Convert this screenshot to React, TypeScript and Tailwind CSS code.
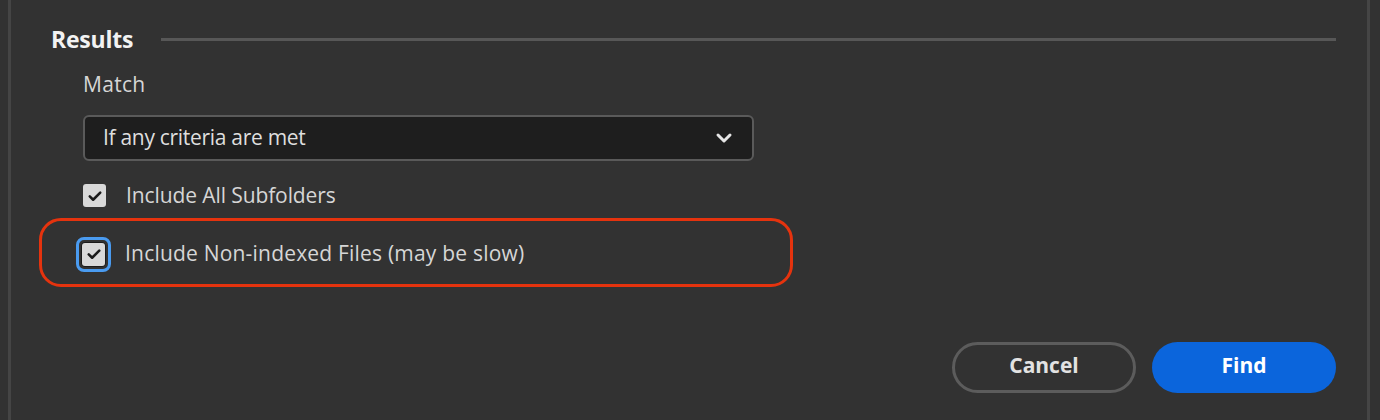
import { ChevronDown } from 'lucide-react'

const font = { fontFamily: '"Open Sans", Lato, sans-serif' }

function Check({ focused }: { focused?: boolean }) {
  const box = (
    <span className="flex h-[23px] w-[23px] items-center justify-center rounded-[3px] bg-[#d9d9d9]">
      <svg viewBox="0 0 24 24" className="h-[18px] w-[18px]" fill="none" stroke="#1b1b1b" strokeWidth="3.4" strokeLinecap="round" strokeLinejoin="round">
        <path d="M5 12.5l4.5 4.5L19 7.5" />
      </svg>
    </span>
  )
  if (!focused) return box
  return (
    <span className="flex items-center justify-center rounded-[8px] border-[3px] border-[#4a9bf0] p-[2px]">
      <span className="rounded-[4px] border border-[#1b1b1b]">{box}</span>
    </span>
  )
}

export default function App() {
  return (
    <div className="h-[420px] w-[1380px] overflow-hidden bg-[#323232] pl-[8px]" style={font}>
      <div className="flex h-full w-[1362px] flex-col border-x-[3px] border-[#454545] pt-[24px] pr-[31px]">
        {/* Section header */}
        <div className="flex items-center gap-[28px] pl-[40px]">
          <span className="text-[23px] font-bold leading-[30px] tracking-[-0.2px] text-[#f2f2f2]">Results</span>
          <div className="h-[3px] flex-1 bg-[#575757]" />
        </div>

        <div className="flex flex-col pl-[72px]">
          <span className="mt-[16px] text-[21px] leading-[28px] tracking-[0.3px] text-[#d6d6d6]">Match</span>

          <div className="mt-[17px] flex h-[46px] w-[671px] items-center justify-between rounded-[6px] border-2 border-[#5a5a5a] bg-[#1e1e1e] pl-[18px] pr-[16px]">
            <span className="text-[21px] tracking-[-0.3px] text-[#dedede]">If any criteria are met</span>
            <ChevronDown className="h-[24px] w-[24px] text-[#e6e6e6]" strokeWidth={3} />
          </div>

          <div className="mt-[19px] flex items-center gap-[20px]">
            <Check />
            <span className="text-[21px] tracking-[-0.1px] text-[#d6d6d6]">Include All Subfolders</span>
          </div>

          <div className="relative mt-[25px] flex items-center gap-[14px]">
            {/* highlight annotation */}
            <div className="absolute left-[-44px] top-[-19px] h-[69px] w-[754px] rounded-[22px] border-[3px] border-[#e5330e]" />
            <span className="ml-[-7px]">
              <Check focused />
            </span>
            <span className="text-[21px] tracking-[0.2px] text-[#d6d6d6]">Include Non-indexed Files (may be slow)</span>
          </div>
        </div>

        <div className="mt-auto mb-[27px] flex justify-end gap-[16px]">
          <button className="h-[51px] w-[184px] rounded-full border-[3px] border-[#5c5c5c] pb-[4px] text-[21px] font-bold text-[#e2e2e2]">
            Cancel
          </button>
          <button className="h-[51px] w-[184px] rounded-full bg-[#0b65dc] pb-[4px] text-[21px] font-bold text-white">
            Find
          </button>
        </div>
      </div>
    </div>
  )
}
